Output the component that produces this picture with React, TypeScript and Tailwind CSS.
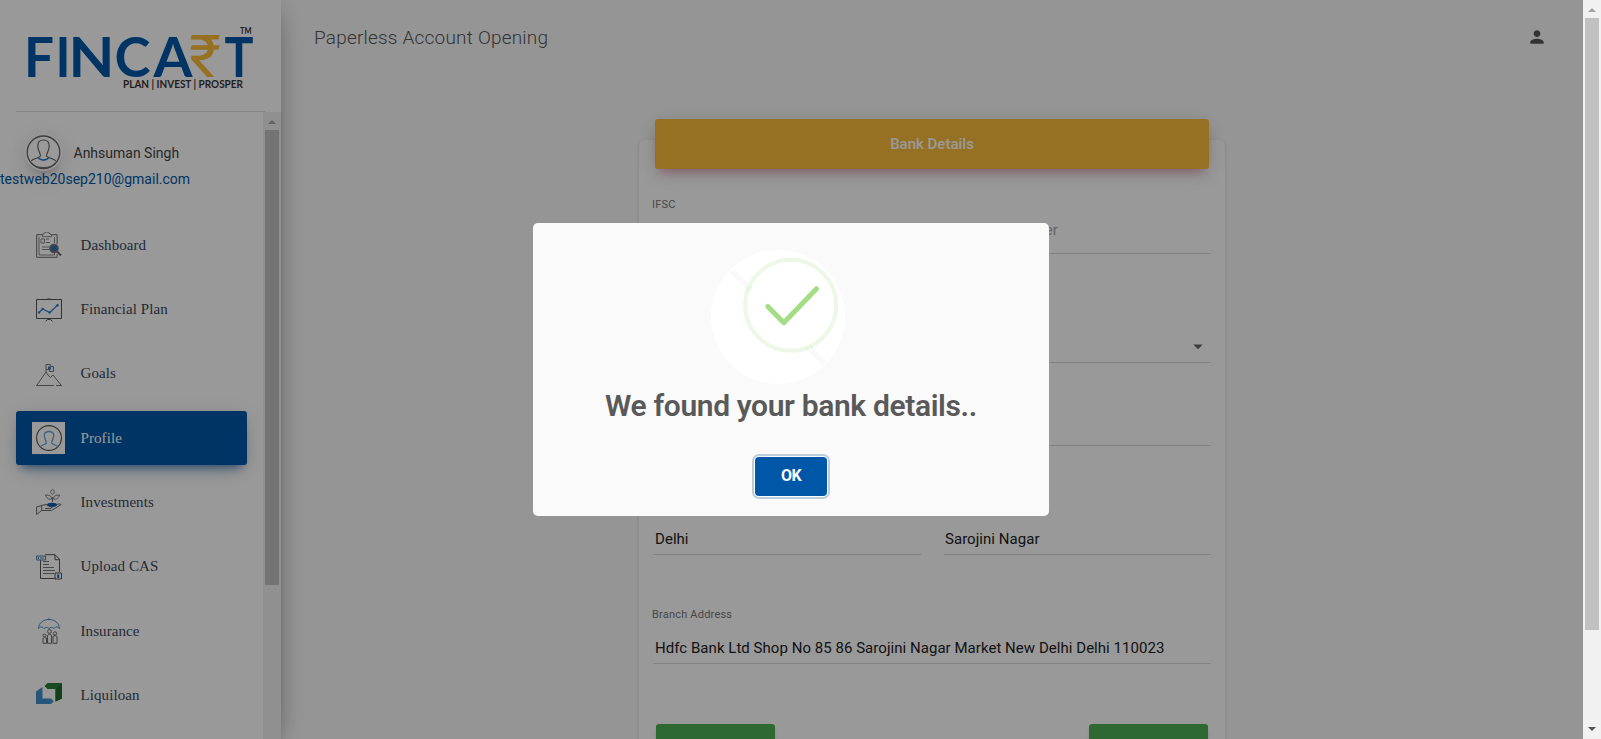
import React from "react";
import { MdPerson } from "react-icons/md";

const Logo = () => (
  <svg width="249" height="111" viewBox="0 0 249 111" className="block">
    <g fill="#0057a8" fontFamily="Lato" fontWeight="700" fontSize="56">
      <text x="8" y="77" textLength="30" lengthAdjust="spacingAndGlyphs">F</text>
      <text x="39.500" y="77" textLength="15" lengthAdjust="spacingAndGlyphs">I</text>
      <text x="52.500" y="77" textLength="46" lengthAdjust="spacingAndGlyphs">N</text>
      <text x="98.500" y="77" textLength="36" lengthAdjust="spacingAndGlyphs">C</text>
      <text x="137.500" y="77" textLength="39" lengthAdjust="spacingAndGlyphs">A</text>
      <text x="208.500" y="77" textLength="29" lengthAdjust="spacingAndGlyphs">T</text>
    </g>
    <text x="173" y="77" fill="#fbbc3c" fontFamily="Roboto" fontWeight="400" fontSize="59" textLength="32" lengthAdjust="spacingAndGlyphs">₹</text>
    <text x="107" y="88" fill="#3b3335" fontFamily="Lato" fontWeight="700" fontSize="12" textLength="120" lengthAdjust="spacingAndGlyphs">PLAN | INVEST | PROSPER</text>
    <text x="224" y="33.500" fill="#3b3335" fontFamily="Lato" fontWeight="700" fontSize="9" textLength="11.500" lengthAdjust="spacingAndGlyphs">TM</text>
  </svg>
);

const Svg = ({ children }: { children: React.ReactNode }) => (
  <svg width="26" height="26" viewBox="0 0 26 26" fill="none" stroke="#6a6a6a" strokeWidth="1" className="block">
    {children}
  </svg>
);

const DashboardIcon = () => (
  <Svg>
    <path d="M.7 2.700h5.800l2-1.500a2.600 2.600 0 0 1 4.600 0l2 1.500h6V12M21.100 22v3.300H.7V2.700" />
    <path d="M6.500 2.700v2h9v-2M3 5v18h15.500v-2M18.500 5v6" stroke="#888" />
    <path d="M5 7h3.500v4H5zM10 7h3M10 10.500h4M6 15h8M6 17.500h8" stroke="#888" />
    <circle cx="18" cy="16.500" r="3.900" fill="#2a6fb5" stroke="#777" strokeWidth="1.800" />
    <path d="m21 19.500 4 4" strokeWidth="2" />
  </Svg>
);
const PlanIcon = () => (
  <Svg>
    <path d="M.5 3.500h25v19H.5zM11.500 3h3M9.500 25.400l2-2h3l2 2M13 22v2" stroke="#555" />
    <path d="m3 16.500 3.700-3.500 7 3.500L21.500 9.300" stroke="#2f7cc4" strokeWidth="1.200" />
    <g fill="#2f7cc4" stroke="none"><circle cx="3" cy="16.500" r="1.200" /><circle cx="6.700" cy="13" r="1.200" /><circle cx="13.700" cy="16.500" r="1.200" /><circle cx="21.500" cy="9.300" r="1.200" /></g>
  </Svg>
);
const GoalsIcon = () => (
  <Svg>
    <path d="M1 24 10 11l2 3 2.300 2.500L17 14l8 10M0 24.500h18M20 24.500h6" stroke="#777" />
    <path d="M10 11V3.500h4.500v2h3v5h-4v-2H10" stroke="#777" />
    <path d="M12 5.500h3v3h-3z" fill="#2f7cc4" stroke="none" />
  </Svg>
);
const ProfileIcon = () => (
  <Svg>
    <circle cx="13" cy="13" r="12.400" strokeWidth="1.100" stroke="#555" />
    <path d="M4 22c1-2.500 5.500-2 6.200-4 .3-1.300-.2-2-.9-3.500-2.200-4.500-1-8 3.700-8s5.900 3.500 3.700 8c-.7 1.500-1.200 2.200-.9 3.500.7 2 5.200 1.500 6.200 4" stroke="#6ba3d4" strokeWidth="1.300" />
  </Svg>
);
const InvestIcon = () => (
  <Svg>
    <path d="M.6 18v7.500l5-4M.6 18l5-1.500v5h10l9.500-6c-1.500-1-3-.5-4.500.2L16 18l-6-2.500-4.400 1M9 19.500h6l1-1.500" />
    <ellipse cx="16" cy="15.700" rx="5" ry="2" fill="#1160aa" stroke="none" />
    <path d="M16.500 13V8M16.500 5.500c-3-2-2-4 0-5 2 1 3 3 0 5ZM15.500 10c-1 1-5 0-6-4 4 0 6 1 6 4ZM17.500 10c1 1 5 0 6-4-4 0-6 1-6 4Z" stroke="#777" />
  </Svg>
);
const UploadIcon = () => (
  <Svg>
    <path d="M4.500 6v18.500H20M9 .7h10l4.500 4.500V18M19 .7v5h4.500" stroke="#555" />
    <path d="M7 10.500h6M7 7.500h6M7 13.500h11M7 16.500h12M7 19.500h11" stroke="#777" />
    <path d="M.6 2h9v4h-9zM2.500 3v2M5 3v2M7 3v2" stroke="#4a7ba5" />
    <path d="M19 19h6.500v6H19z" stroke="#555" />
    <path d="M22.200 20.500v3.500" stroke="#1f66b0" strokeWidth="2" />
  </Svg>
);
const InsuranceIcon = () => (
  <Svg>
    <path d="M2.500 10.500C3 5 7 1.500 13 1.500S23 5 23.500 10.500M13 0v1.500M2.500 10.500c1.500-2 4-2 5.500 0 1.500-1.500 3.500-1.500 5 0 1.500-1.500 3.500-1.500 5 0 1.500-2 4-2 5.500 0" stroke="#4f8cc2" />
    <g><circle cx="13.500" cy="13.500" r="1.900" /><circle cx="8.500" cy="17.500" r="1.500" /><circle cx="19" cy="15.500" r="1.700" /><path d="M11.500 25.300v-8q2-2.500 4 0v8zM7 25.300v-5q1.500-1.500 3.500 0v5zM17 25.300v-7q2-1.500 4 0v7z" /></g>
  </Svg>
);
const LiquiloanIcon = () => (
  <svg width="26" height="26" viewBox="0 0 26 26" className="block">
    <path d="M8.500 4 11.500 1H26v15.500l-6.500 3V7H11.500Z" fill="#278038" />
    <path d="m19.500 7 6.500-6v15.500l-6.500 3Z" fill="#1f6b2e" />
    <path d="M0 9.500 6.500 5v11.500h8.500l2.800 2.700L15 22H0Z" fill="#4390cc" />
  </svg>
);

const items = [
  { label: "Dashboard", Icon: DashboardIcon },
  { label: "Financial Plan", Icon: PlanIcon },
  { label: "Goals", Icon: GoalsIcon },
  { label: "Profile", Icon: ProfileIcon, active: true },
  { label: "Investments", Icon: InvestIcon },
  { label: "Upload CAS", Icon: UploadIcon },
  { label: "Insurance", Icon: InsuranceIcon },
  { label: "Liquiloan", Icon: LiquiloanIcon },
];

const ArrowUp = ({ fill }: { fill: string }) => (
  <svg width="18" height="18" viewBox="0 0 18 18" className="block shrink-0"><path d="M5 12h8L9 8z" fill={fill} /></svg>
);

const Sidebar = () => (
  <aside className="relative z-10 flex w-[281px] shrink-0 flex-col bg-white shadow-[0_10px_30px_-12px_rgba(0,0,0,0.42),0_4px_25px_0_rgba(0,0,0,0.12),0_8px_10px_-5px_rgba(0,0,0,0.2)]">
    <div className="ml-4 w-[249px] border-b border-[#dcdcdc]">
      <Logo />
    </div>
    <div className="flex min-h-0 flex-1">
      <div className="min-w-0 flex-1 overflow-hidden">
        <div className="flex h-[51px] items-end pl-[25.500px]">
          <div className="-mb-[7px] size-[35px] rounded-full bg-white shadow-[0_0_0_1px_#fff,0_10px_30px_-12px_rgba(0,0,0,0.42),0_4px_25px_0_rgba(0,0,0,0.12),0_8px_10px_-5px_rgba(0,0,0,0.2)]">
            <svg width="35" height="35" viewBox="0 0 35 35" fill="none" stroke="#666" strokeWidth="1.300">
              <circle cx="17.500" cy="17.300" r="16.300" />
              <path d="M14.500 21c.2-3-2.700-5-2.700-10 0-4 2.200-6 5.700-6s5.700 2 5.700 6c0 5-2.900 7-2.700 10 1.500 2.500 7 2 9.300 5M14.500 21c-1.500 2.500-7 2-9.300 5M5.500 28c4 6 20 6 24 0" strokeWidth="1.200" />
              <path d="M12 22.500c3 3.500 8 3.500 11 0" stroke="#2f7cc4" strokeWidth="1.700" />
            </svg>
          </div>
          <span className="ml-[13px] text-[14px] leading-[20px] text-[#444]">Anhsuman Singh</span>
        </div>
        <div className="mt-[6px] text-[14px] leading-5 tracking-[0.010px] text-[#0057a8]">testweb20sep210@gmail.com</div>
        <nav className="mt-[29px] flex flex-col gap-[10.340px] pl-4">
          {items.map(({ label, Icon, active }) => (
            <a
              key={label}
              className={
                "flex h-[54px] w-[231px] shrink-0 items-center rounded-[3px] pl-4 font-['Liberation_Serif',serif] text-[15px] tracking-[0.080px] " +
                (active
                  ? "bg-[#0057a8] text-white shadow-[0_12px_20px_-10px_rgba(0,87,168,0.28),0_4px_20px_0_rgba(0,0,0,0.12),0_7px_8px_-5px_rgba(0,87,168,0.6)]"
                  : "text-[#3c4858]")
              }
            >
              <span className={"flex h-8 w-[33px] items-center justify-center " + (active ? "bg-white" : "")}>
                <Icon />
              </span>
              <span className="ml-[15.500px]">{label}</span>
            </a>
          ))}
        </nav>
      </div>
      <div className="flex w-[18px] flex-col items-center bg-[#f1f1f1]">
        <ArrowUp fill="#a3a3a3" />
        <div className="h-[455px] w-[14px] bg-[#c1c1c1]" />
      </div>
    </div>
  </aside>
);

const line = "border-b border-[#d9d9d9]";

const BankForm = () => (
  <section className="mt-[66px] ml-[358px] flex h-[640px] w-[586px] shrink-0 flex-col rounded-[6px] bg-white px-[14px] shadow-[0_1px_4px_0_rgba(0,0,0,0.14)]">
    <div className="mx-[2px] -mt-[21px] flex h-[50px] shrink-0 items-center justify-center rounded-[3px] bg-[#fbbc3c] text-[15px] font-medium text-white shadow-[0_4px_20px_0_rgba(0,0,0,0.14),0_7px_10px_-5px_rgba(233,30,99,0.4)]">
      Bank Details
    </div>
    <div className="grid grid-cols-2 gap-x-[23px] text-[15px] tracking-[0.040px] text-[#222]">
      <div className={"flex h-[85px] flex-col " + line}>
        <label className="mt-[28px] -ml-px text-[11px] leading-4 tracking-[0.200px] text-[#777]">IFSC</label>
        <span className="pl-[2px] leading-9">HDFC0000043</span>
      </div>
      <div className={"flex h-[85px] items-end " + line}>
        <span className="pb-[12px] pl-px leading-[22px] text-[#aaa]">Account Number</span>
      </div>
      <div className={"h-[109px] " + line} />
      <div className={"flex h-[109px] items-end justify-end pr-[8px] pb-[12px] " + line}>
        <svg width="10" height="6" viewBox="0 0 10 6"><path d="M.3.500h9.400L5 5.300z" fill="#666" /></svg>
      </div>
      <div className={"h-[83px] " + line} />
      <div className={"h-[83px] " + line} />
      <div className={"flex h-[109px] items-end pb-[4px] pl-[2px] leading-[22px] " + line}>Delhi</div>
      <div className={"flex h-[109px] items-end pb-[4px] pl-[1.500px] leading-[22px] " + line}>Sarojini Nagar</div>
      <div className={"col-span-2 flex h-[109px] flex-col justify-end pb-[4px] leading-[22px] " + line}>
        <label className="mb-[14px] -ml-px text-[11px] leading-4 tracking-[0.200px] text-[#777]">Branch Address</label>
        <span className="pl-[2px]">Hdfc Bank Ltd Shop No 85 86 Sarojini Nagar Market New Delhi Delhi 110023</span>
      </div>
    </div>
    <div className="mx-[3px] mt-[60px] flex justify-between">
      <button className="h-10 w-[119px] rounded-[3px] bg-[#4caf50] shadow-md" />
      <button className="h-10 w-[119px] rounded-[3px] bg-[#4caf50] shadow-md" />
    </div>
  </section>
);

const SuccessMark = () => (
  <svg width="134" height="135" viewBox="0 0 134 135" className="block">
    <circle cx="67" cy="67" r="67" fill="#fff" />
    <path d="m21 21 93 93" stroke="#fafafa" strokeWidth="6" />
    <circle cx="79.700" cy="55.300" r="45.500" fill="#fff" stroke="#edf8e7" strokeWidth="4" />
    <path d="m35.500 41.500 2-4M39 39.500l1.500-3M94.500 97l2.500 3M99 95.500l2.500 3" stroke="#c9ecb6" strokeWidth=".7" />
    <path d="m56.800 56.500 16 16.200 32.700-34" fill="none" stroke="#a5dc86" strokeWidth="5" strokeLinecap="round" strokeLinejoin="round" />
  </svg>
);

const Modal = () => (
  <div className="absolute inset-0 z-20 flex items-center justify-center bg-black/40 pr-px">
    <div className="flex h-[293px] w-[516px] flex-col items-center rounded-[5px] bg-[#fafafa]">
      <div className="mt-[26.500px] -ml-[26px]">
        <SuccessMark />
      </div>
      <h2 className="mt-[1.500px] text-[30px] leading-10 font-semibold tracking-[-0.360px] text-[#595959]">We found your bank details..</h2>
      <button className="mt-[31px] h-[39px] w-[72px] rounded-[4px] bg-[#0057a8] pb-[2px] text-[16px] font-bold tracking-[-0.500px] text-white shadow-[0_0_0_1px_#fff,0_0_0_3px_rgba(50,100,150,0.3)]">
        OK
      </button>
    </div>
  </div>
);

export default function App() {
  return (
    <div className="flex h-[739px] w-[1601px] overflow-hidden font-['Roboto',sans-serif]">
      <div className="relative flex min-w-0 flex-1 overflow-hidden bg-[#f9f9f9]">
        <Sidebar />
        <main className="min-w-0 flex-1">
          <header className="flex h-[74px] items-center justify-between pr-[36px] pl-[33px] text-[#555]">
            <h1 className="pt-px text-[19px] leading-7 font-light tracking-[0.200px]">Paperless Account Opening</h1>
            <MdPerson size={20} color="#555" />
          </header>
          <BankForm />
        </main>
        <Modal />
      </div>
      <div className="flex w-[18px] shrink-0 flex-col items-center bg-[#f1f1f1]">
        <ArrowUp fill="#a3a3a3" />
        <div className="h-[612px] w-[14px] bg-[#c1c1c1]" />
        <div className="mt-auto rotate-180">
          <ArrowUp fill="#505050" />
        </div>
      </div>
    </div>
  );
}
